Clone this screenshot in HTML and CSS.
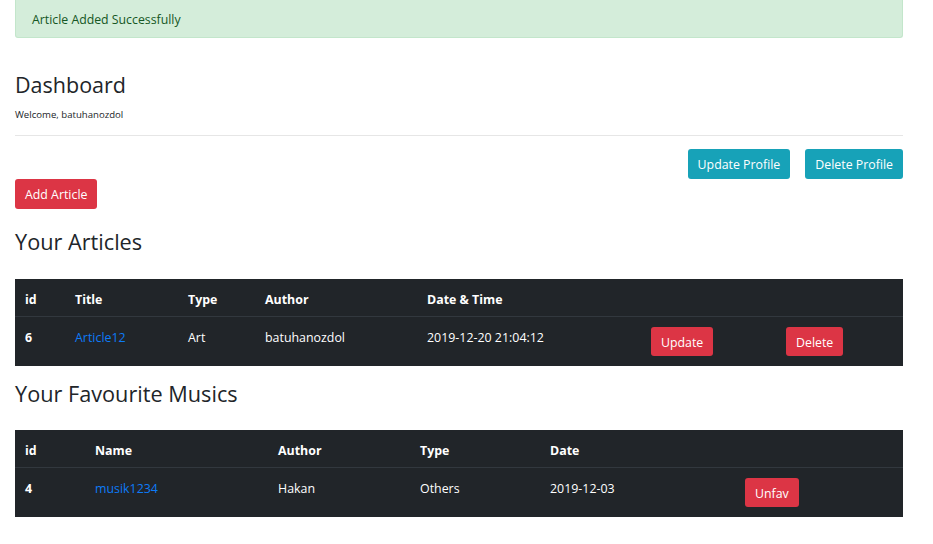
FILE: index.html
```html
<!DOCTYPE html>
<html>
<head>
<meta charset="utf-8">
<link rel="stylesheet" href="styles.css">
</head>
<body>
<div class="container">
  <div class="alert">Article Added Successfully</div>
  <h2 class="title">Dashboard</h2>
  <p class="welcome">Welcome, batuhanozdol</p>
  <hr class="divider">
  <div class="profile-actions">
    <a class="btn btn-info">Update Profile</a>
    <a class="btn btn-info">Delete Profile</a>
  </div>
  <div class="add-row"><a class="btn btn-danger">Add Article</a></div>
  <h3 class="section first">Your Articles</h3>
  <table class="table">
    <colgroup>
      <col class="a1"><col class="a2"><col class="a3"><col class="a4"><col class="a5"><col class="a6"><col class="a7">
    </colgroup>
    <thead>
      <tr><th>id</th><th>Title</th><th>Type</th><th>Author</th><th>Date &amp; Time</th><th></th><th></th></tr>
    </thead>
    <tbody>
      <tr>
        <th>6</th>
        <td><a class="link" href="#">Article12</a></td>
        <td>Art</td>
        <td>batuhanozdol</td>
        <td>2019-12-20 21:04:12</td>
        <td><a class="btn btn-danger btn-cell">Update</a></td>
        <td><a class="btn btn-danger btn-cell">Delete</a></td>
      </tr>
    </tbody>
  </table>
  <h3 class="section">Your Favourite Musics</h3>
  <table class="table">
    <colgroup>
      <col class="m1"><col class="m2"><col class="m3"><col class="m4"><col class="m5"><col class="m6">
    </colgroup>
    <thead>
      <tr><th>id</th><th>Name</th><th>Author</th><th>Type</th><th>Date</th><th></th></tr>
    </thead>
    <tbody>
      <tr>
        <th>4</th>
        <td><a class="link" href="#">musik1234</a></td>
        <td>Hakan</td>
        <td>Others</td>
        <td>2019-12-03</td>
        <td><a class="btn btn-danger btn-cell">Unfav</a></td>
      </tr>
    </tbody>
  </table>
</div>
</body>
</html>
```

FILE: styles.css
```css
* { box-sizing: border-box; }
html, body { margin: 0; padding: 0; background: #fff; }
body {
  font-family: "Open Sans", "Noto Sans", "Liberation Sans", sans-serif;
  font-size: 12.4px;
  line-height: 19px;
  color: #212529;
}
.container {
  width: 888px;
  margin-left: 15px;
}
.alert {
  height: 38px;
  background: #d4edda;
  border: 1px solid #c3e6cb;
  border-top: 0;
  border-radius: 0 0 3px 3px;
  color: #155724;
  padding: 10px 16px 0;
  font-size: 12.3px;
  line-height: 19px;
}
.title {
  margin: 32px 0 0;
  font-size: 21.5px;
  line-height: 29px;
  font-weight: 500;
}
.welcome {
  margin: 8px 0 0;
  font-size: 9.6px;
  line-height: 15px;
}
.divider {
  margin: 13px 0 0;
  border: 0;
  border-top: 1px solid #e6e6e6;
  height: 0;
}
.profile-actions {
  display: flex;
  justify-content: flex-end;
  gap: 15px;
  margin-top: 13px;
}
.btn {
  display: inline-block;
  height: 30px;
  padding: 0 10px;
  line-height: 31px;
  font-size: 12.35px;
  color: #fff;
  border-radius: 3px;
  text-decoration: none;
  white-space: nowrap;
}
.btn-info { background: #17a2b8; }
.btn-danger { background: #dc3545; }
.add-row { display: flex; }
.btn-cell { height: 29px; line-height: 31px; margin-top: -1px; vertical-align: top; }
.section {
  margin: 14px 0 0;
  font-size: 21.7px;
  line-height: 27px;
  font-weight: 500;
}
.section.first { margin-top: 19px; }
.table {
  width: 888px;
  margin-top: 23px;
  border-collapse: collapse;
  table-layout: fixed;
  background: #212529;
  color: #fff;
}
.section.first + .table { margin-top: 24px; }
.table th, .table td {
  text-align: left;
  vertical-align: top;
  padding: 11px 10px 7px 10px;
  line-height: 19px;
}
.table thead th {
  font-weight: 700;
  border-bottom: 1px solid #32383e;
}
.table tbody th { font-weight: 700; }
.table tbody td, .table tbody th { padding-bottom: 10px; }
.link { color: #0d7bf7; text-decoration: none; }
.a1 { width: 50px; }
.a2 { width: 113px; }
.a3 { width: 77px; }
.a4 { width: 162px; }
.a5 { width: 224px; }
.a6 { width: 135px; }
.a7 { width: 127px; }
.m1 { width: 70px; }
.m2 { width: 183px; }
.m3 { width: 142px; }
.m4 { width: 130px; }
.m5 { width: 195px; }
.m6 { width: 168px; }
```
